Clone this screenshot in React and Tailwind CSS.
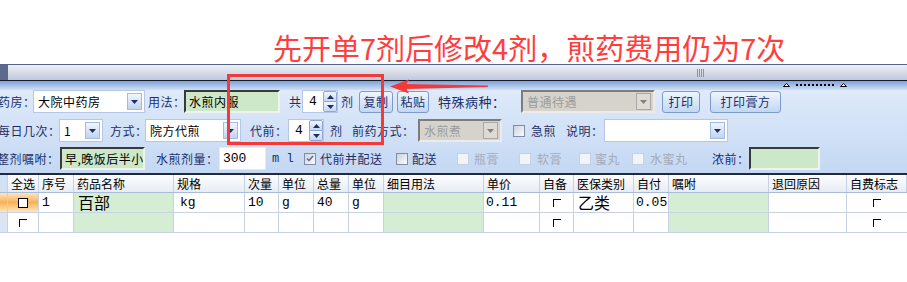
import React from "react";

const MONO = "font-['Liberation_Mono','DejaVu_Sans_Mono',monospace]";
const COLS =
  "grid grid-cols-[8px_31px_35px_100px_71px_34px_35px_35px_35px_100px_56px_34px_60px_35px_100px_78px_60px]";

const Label = ({ className = "", gray, children }) => (
  <span
    className={`shrink-0 whitespace-nowrap text-[12px] leading-[16px] tracking-[0.5px] ${
      gray ? "text-[#a4abb9]" : "text-[#1c2f68]"
    } ${className}`}
  >
    {children}
  </span>
);

const DropBtn = ({ disabled }) => (
  <span
    className={`flex h-[17px] w-[15px] shrink-0 items-center justify-center border ${
      disabled
        ? "border-[#a8a8a8] bg-[#dedbd4]"
        : "border-[#a3bbe2] bg-linear-to-b from-[#f1f6fe] to-[#bfd3f1]"
    }`}
  >
    <svg width="7" height="4" viewBox="0 0 7 4">
      <path d="M0 0H7L3.5 4Z" fill={disabled ? "#808080" : "#1f2f66"} />
    </svg>
  </span>
);

const Combo = ({ className = "", text, disabled }) => (
  <div
    className={`flex h-[23px] shrink-0 items-center justify-between pl-[4px] pr-[2px] ${
      disabled
        ? "border-2 border-t-[#7c7c7c] border-l-[#7c7c7c] border-b-[#ecebe8] border-r-[#ecebe8] bg-[#d6d3cc]"
        : "border border-[#b5c7e4] bg-white"
    } ${className}`}
  >
    <span
      className={`whitespace-nowrap text-[12px] leading-[16px] tracking-[0.5px] ${
        disabled ? "text-[#9c9c9c]" : "text-black"
      }`}
    >
      {text}
    </span>
    <DropBtn disabled={disabled} />
  </div>
);

const GreenBox = ({ className = "", children }) => (
  <div
    className={`flex h-[23px] shrink-0 items-center overflow-hidden whitespace-nowrap border-2 border-t-[#3a3a3a] border-l-[#3a3a3a] border-b-[#eef3ec] border-r-[#eef3ec] bg-[#cde7c9] pl-[3px] text-[12px] tracking-[0.5px] text-black ${className}`}
  >
    {children}
  </div>
);

const Arrow = ({ up }) => (
  <svg width="7" height="4" viewBox="0 0 7 4">
    <path d={up ? "M0 4H7L3.5 0Z" : "M0 0H7L3.5 4Z"} fill="#1f2f66" />
  </svg>
);

const Spin = ({ className = "" }) => (
  <div className={`flex h-[23px] shrink-0 border border-[#b5c7e4] bg-white ${className}`}>
    <span className={`flex-1 text-center text-[13px] leading-[21px] ${MONO}`}>4</span>
    <span className="flex w-[14px] flex-col">
      <span className="flex flex-1 items-center justify-center rounded-t-[2px] border border-[#8ea8d5] bg-linear-to-b from-[#f1f6fe] to-[#c4d7f2]">
        <Arrow up />
      </span>
      <span className="flex flex-1 items-center justify-center rounded-b-[2px] border border-t-0 border-[#8ea8d5] bg-linear-to-b from-[#f1f6fe] to-[#c4d7f2]">
        <Arrow />
      </span>
    </span>
  </div>
);

const Btn = ({ className = "", children }) => (
  <span
    className={`flex h-[22px] shrink-0 items-center justify-center rounded-[3px] border border-[#7d9bca] bg-linear-to-b from-[#eef5fe] to-[#c2d7f4] text-[12px] tracking-[0.5px] text-[#1c2f68] ${className}`}
  >
    {children}
  </span>
);

const Check = ({ className = "", checked, disabled }) => (
  <span
    className={`flex h-[12px] w-[12px] shrink-0 items-center justify-center border ${
      disabled
        ? "border-[#c6d0e2] bg-[#f1f4f9]"
        : "border-[#7e8ea9] bg-linear-to-br from-[#cdd2dc] to-[#fbfbfb]"
    } ${className}`}
  >
    {checked && (
      <svg width="8" height="7" viewBox="0 0 8 7">
        <path d="M1 3.5L3 5.5L7 1" stroke="#5a6a8e" strokeWidth="1.5" fill="none" />
      </svg>
    )}
  </span>
);

const GridBox = () => <span className="block h-[8px] w-[8px] border-l border-t border-black" />;

const Cell = ({ className = "", children }) => (
  <div className={`overflow-hidden whitespace-nowrap border-r border-[#c7d1e4] ${className}`}>{children}</div>
);

const headers = [
  "全选",
  "序号",
  "药品名称",
  "规格",
  "次量",
  "单位",
  "总量",
  "单位",
  "细目用法",
  "单价",
  "自备",
  "医保类别",
  "自付",
  "嘱咐",
  "退回原因",
  "自费标志",
];

export default function App() {
  return (
    <div className="relative h-[282px] w-[907px] overflow-hidden bg-white font-['Noto_Sans_CJK_SC','DejaVu_Sans',sans-serif]">
      <div className="h-[64px] whitespace-nowrap pl-[273px] pt-[33px] text-[29px] leading-[29px] text-[#ff3d3d]">
        先开单7剂后修改4剂，煎药费用仍为7次
      </div>

      {/* scroll bar */}
      <div className="flex h-[16px] border-t border-[#56658c] bg-linear-to-b from-[#eef0f6] to-[#c0c8dc]">
        <span className="w-[8px] bg-[#5c6a8c]" />
        <span className="ml-[689px] mt-[4px] flex h-[8px] gap-[1px]">
          <span className="w-px bg-[#8a92a8]" />
          <span className="w-px bg-[#8a92a8]" />
          <span className="w-px bg-[#8a92a8]" />
          <span className="w-px bg-[#8a92a8]" />
        </span>
      </div>
      <div className="h-px bg-[#161b28]" />

      {/* splitter strip */}
      <div className="flex h-[9px] items-start bg-linear-to-b from-[#7ea2d8] to-[#cfe0f6]">
        <span className="ml-[783px] mt-[2px] flex items-center gap-[6px]">
          <svg width="7" height="4" viewBox="0 0 7 4">
            <path d="M0.5 3.5H6.5L3.5 0.5Z" fill="#fff" stroke="#000" strokeWidth="1" />
          </svg>
          <span className="flex gap-[2px]">
            {Array.from({ length: 10 }).map((_, i) => (
              <span key={i} className="h-[2px] w-[2px] bg-black" />
            ))}
          </span>
          <svg width="7" height="4" viewBox="0 0 7 4">
            <path d="M0.5 3.5H6.5L3.5 0.5Z" fill="#fff" stroke="#000" strokeWidth="1" />
          </svg>
        </span>
      </div>

      {/* form panel */}
      <div className="flex h-[83px] flex-col bg-linear-to-b from-[#dfeafa] to-[#c4d8f3]">
        <div className="flex h-[23px] items-center">
          <Label className="-ml-[2px] w-[35px]">药房：</Label>
          <Combo className="w-[112px]" text="大院中药房" />
          <Label className="ml-[3px] w-[36px]">用法：</Label>
          <GreenBox className="w-[96px]">水煎内服</GreenBox>
          <Label className="ml-[9px] w-[13px]">共</Label>
          <Spin className="w-[36px]" />
          <Label className="ml-[3px] w-[15px]">剂</Label>
          <Btn className="ml-[3px] w-[34px]">复制</Btn>
          <Btn className="ml-[4px] w-[32px]">粘贴</Btn>
          <Label className="ml-[9px] w-[74px] text-[13px]">特殊病种：</Label>
          <Combo className="ml-[9px] w-[134px]" text="普通待遇" disabled />
          <Btn className="ml-[7px] w-[38px]">打印</Btn>
          <Btn className="ml-[10px] w-[71px]">打印膏方</Btn>
        </div>

        <div className="mt-[6px] flex h-[23px] items-center">
          <Label className="-ml-[2px] w-[61px]">每日几次：</Label>
          <Combo className="w-[44px]" text="1" />
          <Label className="ml-[7px] w-[35px]">方式：</Label>
          <Combo className="w-[96px]" text="院方代煎" />
          <Label className="ml-[9px] w-[38px]">代前：</Label>
          <Spin className="w-[36px]" />
          <Label className="ml-[6px] w-[16px]">剂</Label>
          <Label className="ml-[6px] w-[66px]">前药方式：</Label>
          <Combo className="w-[84px]" text="水煎煮" disabled />
          <Check className="ml-[11px]" />
          <Label className="ml-[6px] w-[30px]">急煎</Label>
          <Label className="ml-[5px] w-[38px]">说明：</Label>
          <Combo className="w-[124px]" text="" />
        </div>

        <div className="mt-[5px] flex h-[23px] items-center">
          <Label className="-ml-[3px] w-[63px]">整剂嘱咐：</Label>
          <GreenBox className="w-[85px]">早,晚饭后半小时</GreenBox>
          <Label className="ml-[11px] w-[63px]">水煎剂量：</Label>
          <div className={`flex h-[23px] w-[47px] shrink-0 items-center border border-[#e4ebf6] bg-white pl-[3px] text-[13px] ${MONO}`}>
            300
          </div>
          <span className={`ml-[6px] w-[32px] shrink-0 text-[12px] text-[#1c2f68] ${MONO}`}>m l</span>
          <Check checked />
          <Label className="ml-[4px] w-[76px]">代前并配送</Label>
          <Check />
          <Label className="ml-[4px] w-[45px]">配送</Label>
          <Check disabled />
          <Label gray className="ml-[5px] w-[45px]">
            瓶膏
          </Label>
          <Check disabled />
          <Label gray className="ml-[6px] w-[42px]">
            软膏
          </Label>
          <Check disabled />
          <Label gray className="ml-[4px] w-[37px]">
            蜜丸
          </Label>
          <Check disabled />
          <Label gray className="ml-[6px] w-[62px]">
            水蜜丸
          </Label>
          <Label className="w-[37px]">浓前：</Label>
          <GreenBox className="w-[71px]" />
        </div>
      </div>

      {/* grid */}
      <div className="h-[2px] bg-[#1f2a40]" />
      <div className={`${COLS} h-[18px] border-b border-[#a9bcda] bg-linear-to-b from-[#fdfdfe] to-[#e7ecf4] text-[12px] leading-[17px] text-black`}>
        <Cell className="bg-[#d3e0f3]" />
        {headers.map((h, i) => (
          <Cell key={i} className="pl-[3px]">
            {h}
          </Cell>
        ))}
      </div>

      <div className={`${COLS} h-[20px] border-b border-[#c9d3e6] text-[13px] leading-[19px] text-black`}>
        <Cell className="bg-linear-to-b from-[#fde4bd] via-[#f6b253] to-[#fde6c4]" />
        <Cell className="flex items-center justify-center bg-linear-to-b from-[#fde4bd] via-[#f6b253] to-[#fde6c4]">
          <span className="block h-[10px] w-[10px] border border-black bg-white" />
        </Cell>
        <Cell className={`pl-[3px] ${MONO}`}>1</Cell>
        <Cell className="bg-[#d5eed3] pl-[4px] text-[16px] leading-[19px]">百部</Cell>
        <Cell className={`pl-[6px] ${MONO}`}>kg</Cell>
        <Cell className={`pl-[3px] ${MONO}`}>10</Cell>
        <Cell className={`pl-[3px] ${MONO}`}>g</Cell>
        <Cell className={`pl-[3px] ${MONO}`}>40</Cell>
        <Cell className={`pl-[3px] ${MONO}`}>g</Cell>
        <Cell className="bg-[#d5eed3]" />
        <Cell className={`pl-[2px] ${MONO}`}>0.11</Cell>
        <Cell className="flex items-center justify-center">
          <GridBox />
        </Cell>
        <Cell className="pl-[4px] text-[16px] leading-[19px]">乙类</Cell>
        <Cell className={`pl-[2px] ${MONO}`}>0.05</Cell>
        <Cell className="bg-[#d5eed3]" />
        <Cell />
        <div className="flex items-center justify-center">
          <GridBox />
        </div>
      </div>

      <div className={`${COLS} h-[20px] border-b border-[#c9d3e6]`}>
        <Cell className="bg-[#dbe5f4]" />
        <Cell className="flex items-center justify-center">
          <GridBox />
        </Cell>
        <Cell />
        <Cell className="bg-[#d5eed3]" />
        <Cell />
        <Cell />
        <Cell />
        <Cell />
        <Cell />
        <Cell className="bg-[#d5eed3]" />
        <Cell />
        <Cell className="flex items-center justify-center">
          <GridBox />
        </Cell>
        <Cell />
        <Cell />
        <Cell className="bg-[#d5eed3]" />
        <Cell />
        <div className="flex items-center justify-center">
          <GridBox />
        </div>
      </div>

      {/* annotation overlay */}
      <svg className="pointer-events-none absolute left-0 top-0" width="907" height="282" viewBox="0 0 907 282">
        <rect x="228.5" y="75.5" width="154" height="68" fill="none" stroke="#f23a3a" strokeWidth="3" />
        <path d="M390 86.5L409 79.5L406.5 84L488 85.5L488 87L406.5 89L409 93.5Z" fill="#f23a3a" />
      </svg>
    </div>
  );
}
